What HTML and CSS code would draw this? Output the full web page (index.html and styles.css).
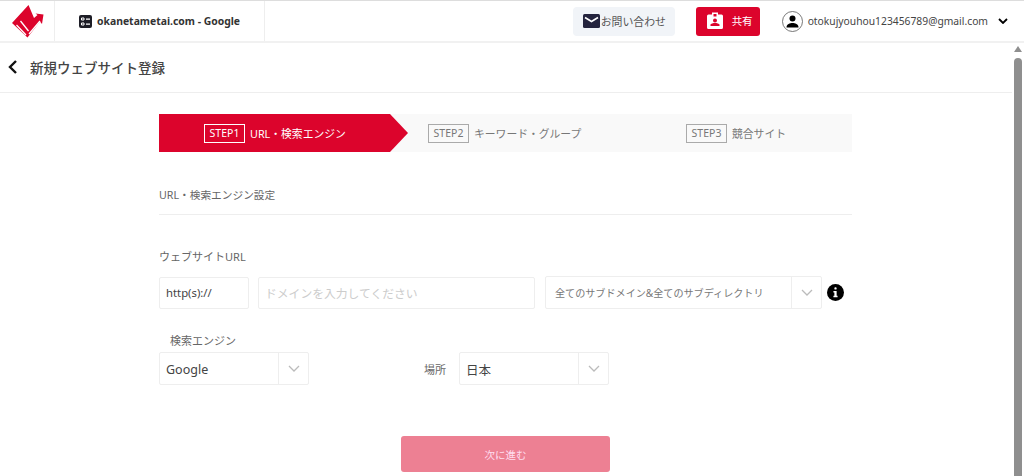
FILE: index.html
```html
<!DOCTYPE html>
<html lang="ja">
<head>
    <meta charset="UTF-8" />
    <title>新規ウェブサイト登録</title>
    <link rel="stylesheet" href="styles.css">
</head>
<body>
<div class="app">
    <header class="topbar">
        <div class="logo-cell">
            <svg width="54" height="40" viewBox="0 1 54 40">
                <path fill="#dc042c" d="M12 23 L28.500 5 L34 18 L37.500 15 L35.500 13.500 L43.500 14.500 L42 24 L40 21.500 L27.500 37.500 Z"/>
                <path fill="none" stroke="#fff" stroke-width="1.300" d="M16.500 25 L26 35 M20.500 21 L28.500 31 M29 34 L40 21"/>
            </svg>
        </div>
        <div class="site-cell">
            <svg width="13" height="13" viewBox="0 0 13 13">
                <rect width="13" height="13" rx="2" fill="#1d1d26"/>
                <path fill="none" stroke="#fff" d="M2.500 3h2.500v2h-2.500z M2.500 8h2.500v2h-2.500z"/>
                <path fill="#fff" d="M7 3.500h4v1.200h-4z M7 8.500h4v1.200h-4z"/>
            </svg>
            <span>okanetametai.com - Google</span>
        </div>
        <div class="topbar-right">
            <button class="contact-btn">
                <svg width="17" height="14" viewBox="0 0 17 14">
                    <rect width="17" height="14" rx="1.500" fill="#24243e"/>
                    <path fill="none" stroke="#fff" stroke-width="1.600" d="M2 3.500 L8.500 7.500 L15 3.500"/>
                </svg>
                お問い合わせ
            </button>
            <button class="share-btn">
                <svg width="16" height="17" viewBox="0 0 16 17">
                    <path fill="#fff" fill-rule="evenodd" d="M1.500 2.500H5V0.500H11V2.500H14.500A1.500 1.500 0 0 1 16 4V15.500A1.500 1.500 0 0 1 14.500 17H1.500A1.500 1.500 0 0 1 0 15.500V4A1.500 1.500 0 0 1 1.500 2.500Z M6.500 2V4.500H9.500V2Z M8 6.500A2 2 0 1 0 8 10.500A2 2 0 1 0 8 6.500Z M3.500 14H12.500V12.800C12.500 11.500 9.500 11 8 11C6.500 11 3.500 11.500 3.500 12.800Z"/>
                </svg>
                <span>共有</span>
            </button>
            <div class="user">
                <svg width="21" height="21" viewBox="0 0 21 21">
                    <circle cx="10.500" cy="10.500" r="10" fill="#fff" stroke="#555" stroke-width="0.800"/>
                    <circle cx="10.500" cy="7.500" r="3" fill="#000"/>
                    <path fill="#000" d="M4.500 16.500C4.500 13 8 12 10.500 12C13 12 16.500 13 16.500 16.500Z"/>
                </svg>
                <span class="user-mail">otokujyouhou123456789@gmail.com</span>
                <svg class="user-caret" width="10" height="6" viewBox="0 0 10 6">
                    <path fill="none" stroke="#000" stroke-width="1.800" d="M1 1 L5 5 L9 1"/>
                </svg>
            </div>
        </div>
    </header>

    <div class="body-row">
        <main class="main">
            <div class="page-head">
                <svg width="10" height="14" viewBox="0 0 10 14">
                    <path fill="none" stroke="#111" stroke-width="2.400" d="M8 1 L2 7 L8 13"/>
                </svg>
                <h1>新規ウェブサイト登録</h1>
            </div>

            <div class="wizard">
                <div class="steps">
                    <div class="step step-active">
                        <span class="step-tag">STEP1</span>
                        <span>URL・検索エンジン</span>
                    </div>
                    <div class="step step-two">
                        <span class="step-tag">STEP2</span>
                        <span>キーワード・グループ</span>
                    </div>
                    <div class="step step-three">
                        <span class="step-tag">STEP3</span>
                        <span>競合サイト</span>
                    </div>
                </div>

                <h2 class="section-title">URL・検索エンジン設定</h2>

                <div class="field-label">ウェブサイトURL</div>
                <div class="url-row">
                    <div class="box proto">http(s)://</div>
                    <input class="box domain" type="text" placeholder="ドメインを入力してください">
                    <div class="select scope">
                        <span class="select-value">全てのサブドメイン&amp;全てのサブディレクトリ</span>
                        <span class="select-arrow">
                            <svg width="12" height="7" viewBox="0 0 12 7"><path fill="none" stroke="#bbb" stroke-width="1.300" d="M1 1 L6 6 L11 1"/></svg>
                        </span>
                    </div>
                    <svg class="info" width="17" height="17" viewBox="0 0 18 18">
                        <circle cx="9" cy="9" r="9" fill="#000"/>
                        <rect x="7.800" y="3.500" width="2.400" height="2.400" rx="1" fill="#fff"/>
                        <path fill="#fff" d="M6.800 7.500H10.200V12.500H11.200V14H6.800V12.500H7.800V9H6.800Z"/>
                    </svg>
                </div>

                <div class="engine-label">検索エンジン</div>
                <div class="engine-row">
                    <div class="select engine">
                        <span class="select-value large">Google</span>
                        <span class="select-arrow">
                            <svg width="12" height="7" viewBox="0 0 12 7"><path fill="none" stroke="#bbb" stroke-width="1.300" d="M1 1 L6 6 L11 1"/></svg>
                        </span>
                    </div>
                    <span class="place-label">場所</span>
                    <div class="select engine">
                        <span class="select-value large">日本</span>
                        <span class="select-arrow">
                            <svg width="12" height="7" viewBox="0 0 12 7"><path fill="none" stroke="#bbb" stroke-width="1.300" d="M1 1 L6 6 L11 1"/></svg>
                        </span>
                    </div>
                </div>

                <div class="next-row">
                    <button class="next-btn">次に進む</button>
                </div>
            </div>
        </main>
        <div class="scrollbar">
            <div class="scroll-up"></div>
            <div class="scroll-thumb"></div>
        </div>
    </div>
</div>
</body>
</html>
```

FILE: styles.css
```css
* {
    box-sizing: border-box;
    margin: 0;
    padding: 0;
}

body {
    background-color: white;
    font-family: "Noto Sans", "Noto Sans CJK JP", sans-serif;
    color: #444;
    overflow: hidden;
}

.app {
    height: 476px;
    overflow: hidden;
}

.topbar {
    display: flex;
    align-items: stretch;
    height: 43px;
    border-top: 1px solid #ddd;
    border-bottom: 2px solid #f1f1f1;
}

.logo-cell {
    display: flex;
    align-items: center;
    justify-content: center;
    width: 55px;
    border-right: 1px solid #eee;
}

.site-cell {
    display: flex;
    align-items: center;
    gap: 5px;
    width: 210px;
    padding-left: 24px;
    border-right: 1px solid #eee;
    font-size: 10.400px;
    font-weight: 700;
    color: #333;
}

.topbar-right {
    display: flex;
    align-items: center;
    margin-left: auto;
}

.contact-btn {
    display: flex;
    align-items: center;
    gap: 1px;
    width: 102px;
    height: 29px;
    padding-left: 10px;
    background-color: #f1f4f8;
    border: none;
    border-radius: 4px;
    font-family: inherit;
    font-size: 10.900px;
    color: #555;
}

.share-btn {
    display: flex;
    align-items: center;
    gap: 9px;
    width: 64px;
    height: 29px;
    margin-left: 21px;
    padding-left: 11px;
    padding-bottom: 1px;
    background-color: #dc042c;
    border: none;
    border-radius: 3px;
    font-family: inherit;
    font-size: 10.500px;
    color: white;
}

.user {
    display: flex;
    align-items: center;
    margin-left: 22px;
    padding-right: 16px;
}

.user-mail {
    margin-left: 5px;
    font-size: 10.300px;
    color: #444;
}

.user-caret {
    margin-left: 10px;
}

.body-row {
    display: flex;
    height: 433px;
}

.main {
    flex: 1;
    min-width: 0;
}

.page-head {
    display: flex;
    align-items: center;
    gap: 12px;
    height: 50px;
    padding-left: 8px;
    padding-bottom: 2px;
    border-bottom: 1px solid #eee;
}

.page-head h1 {
    font-size: 13.500px;
    font-weight: 500;
    color: #444;
}

.wizard {
    width: 693px;
    margin-left: 159px;
    padding-top: 21px;
}

.steps {
    display: flex;
    align-items: center;
    height: 38px;
    background-color: #f9f9f9;
    font-size: 10.800px;
    color: #777;
}

.step {
    display: flex;
    align-items: center;
    gap: 5px;
    height: 100%;
}

.step-active {
    position: relative;
    width: 231px;
    padding-left: 45px;
    background-color: #dc042c;
    color: white;
}

.step-active::after {
    content: "";
    position: absolute;
    left: 100%;
    top: 0;
    border-left: 18px solid #dc042c;
    border-top: 19px solid transparent;
    border-bottom: 19px solid transparent;
}

.step-two {
    margin-left: 38px;
    width: 258px;
}

.step-tag {
    display: inline-block;
    width: 41px;
    height: 19px;
    line-height: 17px;
    text-align: center;
    border: 1px solid #aaa;
    font-size: 10.500px;
    color: #777;
}

.step-active .step-tag {
    border-color: white;
    color: white;
}

.section-title {
    height: 63px;
    line-height: 20px;
    padding-top: 33px;
    border-bottom: 1px solid #eee;
    font-size: 10.700px;
    font-weight: 400;
    color: #666;
}

.field-label {
    margin-top: 33px;
    font-size: 11px;
    line-height: 18px;
    color: #666;
}

.url-row {
    display: flex;
    align-items: flex-end;
    margin-top: 10px;
}

.box {
    height: 32px;
    border: 1px solid #eee;
    border-radius: 2px;
    font-family: inherit;
    font-size: 11.300px;
    color: #444;
}

.proto {
    width: 90px;
    padding-left: 6px;
    line-height: 30px;
}

.domain {
    width: 277px;
    margin-left: 9px;
    padding-left: 6px;
    font-size: 11.800px;
    outline: none;
}

.domain::placeholder {
    color: #ccc;
}

.select {
    display: flex;
    align-items: center;
    border: 1px solid #eee;
    border-radius: 2px;
    background-color: white;
}

.scope {
    width: 277px;
    height: 33px;
    margin-left: 10px;
}

.select-value {
    flex: 1;
    padding-left: 9px;
    font-size: 10.100px;
    color: #777;
    white-space: nowrap;
}

.select-value.large {
    padding-left: 6px;
    padding-top: 2px;
    font-size: 12.500px;
    color: #444;
}

.select-arrow {
    display: flex;
    align-items: center;
    justify-content: center;
    flex: none;
    width: 30px;
    height: 100%;
    border-left: 1px solid #eee;
}

.info {
    margin-left: 5px;
    margin-bottom: 8px;
}

.engine-label {
    margin-top: 23px;
    padding-left: 11px;
    font-size: 11px;
    line-height: 18px;
    color: #666;
}

.engine-row {
    display: flex;
    align-items: center;
    margin-top: 2px;
}

.engine {
    width: 150px;
    height: 33px;
}

.place-label {
    width: 150px;
    padding-left: 115px;
    font-size: 11px;
    color: #666;
}

.next-row {
    margin-top: 51px;
    padding-left: 242px;
}

.next-btn {
    width: 209px;
    height: 36px;
    background-color: #ed8093;
    border: none;
    border-radius: 3px;
    font-family: inherit;
    font-size: 10.500px;
    color: #fde;
}

.scrollbar {
    display: flex;
    flex-direction: column;
    align-items: center;
    flex: none;
    width: 12px;
    padding-top: 3px;
}

.scroll-up {
    width: 0;
    height: 0;
    border-left: 4px solid transparent;
    border-right: 4px solid transparent;
    border-bottom: 6px solid #8f8f8f;
}

.scroll-thumb {
    flex: 1;
    width: 8px;
    margin-top: 6px;
    background-color: #8f8f8f;
    border-radius: 4px 4px 0 0;
}
```
